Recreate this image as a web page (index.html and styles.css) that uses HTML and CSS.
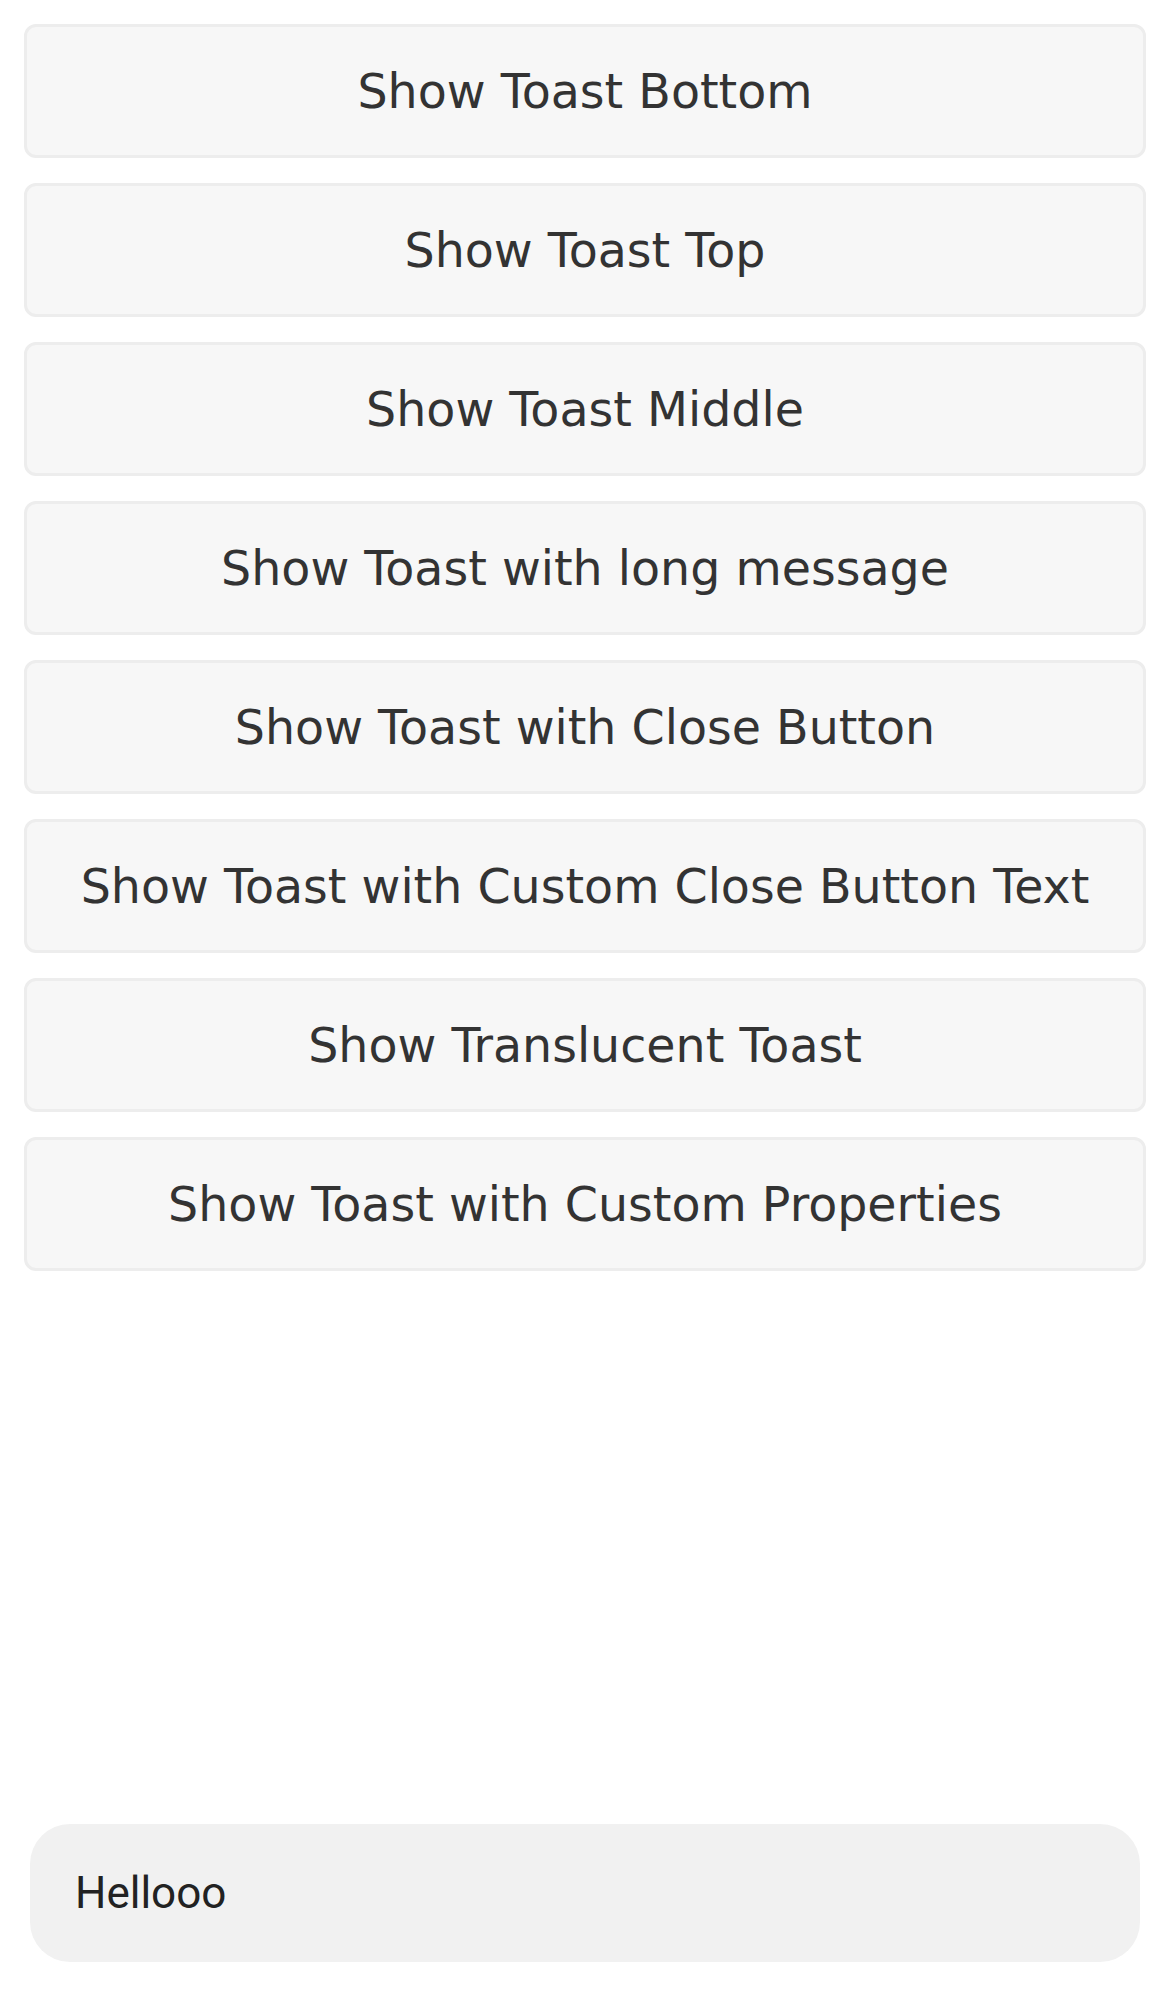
FILE: index.html
```html
<!DOCTYPE html>
<html lang="en">
<head>
<meta charset="utf-8">
<title>Toast demo</title>
<link rel="stylesheet" href="styles.css">
</head>
<body>
<main class="list">
  <button class="btn">Show Toast Bottom</button>
  <button class="btn">Show Toast Top</button>
  <button class="btn">Show Toast Middle</button>
  <button class="btn">Show Toast with long message</button>
  <button class="btn">Show Toast with Close Button</button>
  <button class="btn">Show Toast with Custom Close Button Text</button>
  <button class="btn">Show Translucent Toast</button>
  <button class="btn">Show Toast with Custom Properties</button>
</main>
<div class="toast">Hellooo</div>
</body>
</html>
```
FILE: styles.css
```css
html, body {
  margin: 0;
  padding: 0;
  background: #ffffff;
}
body {
  height: 1992px;
}
.list {
  display: flex;
  flex-direction: column;
  gap: 25px;
  padding: 24px;
}
.btn {
  box-sizing: border-box;
  height: 134px;
  width: 100%;
  margin: 0;
  background: #f7f7f7;
  border: 3px solid #ededed;
  border-radius: 12px;
  color: #333333;
  font-family: "DejaVu Sans", sans-serif;
  font-size: 47.5px;
  display: flex;
  align-items: center;
  justify-content: center;
  padding: 0;
}
.toast {
  position: fixed;
  left: 30px;
  right: 30px;
  bottom: 30px;
  height: 138px;
  box-sizing: border-box;
  background: #f1f1f1;
  border-radius: 40px;
  display: flex;
  align-items: center;
  padding-left: 45px;
  color: #222222;
  font-family: Roboto, sans-serif;
  font-size: 44px;
}
```
